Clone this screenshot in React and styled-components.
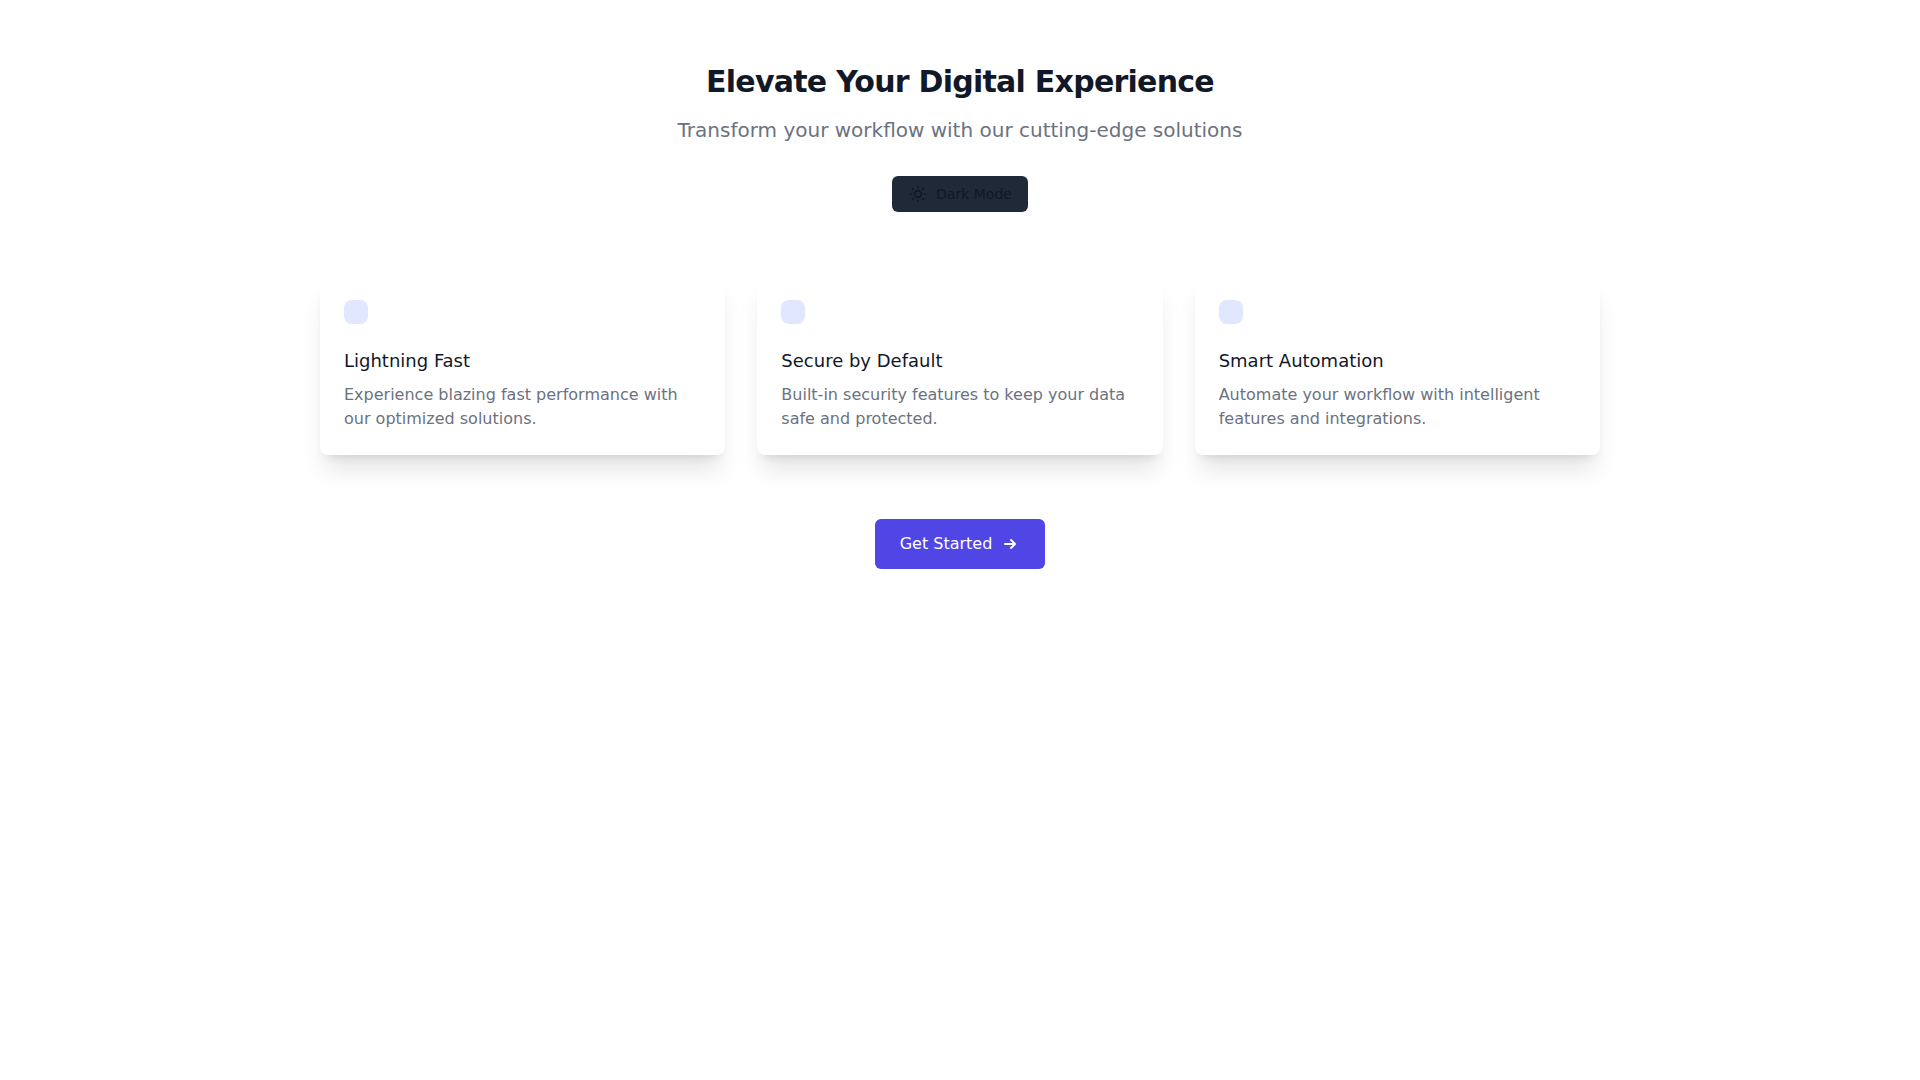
import { useState } from 'react';
import styled, { createGlobalStyle } from 'styled-components';

const GlobalStyle = createGlobalStyle`
    *, *::before, *::after {
        box-sizing: border-box;
    }

    body {
        margin: 0;
        background-color: #ffffff;
        font-family: 'DejaVu Sans', sans-serif;
        line-height: 1.5;
    }
`;

const Page = styled.main`
    min-height: 100vh;
    padding: 64px 32px;
    background-color: #ffffff;
`;

const Container = styled.div`
    max-width: 1280px;
    margin: 0 auto;
    display: flex;
    flex-direction: column;
    align-items: center;
    gap: 64px;
`;

const Header = styled.header`
    display: flex;
    flex-direction: column;
    align-items: center;
    text-align: center;
`;

const Title = styled.h1`
    margin: 0;
    font-size: 30px;
    line-height: 36px;
    font-weight: 800;
    letter-spacing: -0.025em;
    color: #111827;
`;

const Subtitle = styled.p`
    margin: 16px 0 0;
    font-size: 20px;
    line-height: 28px;
    color: #6b7280;
`;

const ModeButton = styled.button`
    display: inline-flex;
    align-items: center;
    gap: 8px;
    margin-top: 32px;
    padding: 8px 16px;
    border: none;
    border-radius: 6px;
    background-color: #1f2937;
    color: #111827;
    font-family: inherit;
    font-size: 14px;
    line-height: 20px;
    cursor: pointer;
`;

const Icon = styled.svg`
    width: 20px;
    height: 20px;
    flex-shrink: 0;
    fill: ${(props) => (props.$outline ? 'none' : 'currentColor')};
    stroke: ${(props) => (props.$outline ? 'currentColor' : 'none')};
    stroke-width: 2;
    stroke-linecap: round;
    stroke-linejoin: round;
`;

const Features = styled.section`
    width: 100%;
    display: grid;
    grid-template-columns: repeat(3, minmax(0, 1fr));
    gap: 32px;
`;

const Card = styled.article`
    padding: 24px;
    border-radius: 8px;
    background-color: #ffffff;
    box-shadow: 0 20px 25px -5px rgba(0, 0, 0, 0.1), 0 8px 10px -6px rgba(0, 0, 0, 0.1);
`;

const CardBadge = styled.div`
    width: 24px;
    height: 24px;
    border-radius: 8px;
    background-color: #e0e7ff;
`;

const CardTitle = styled.h3`
    margin: 23px 0 0;
    font-size: 18px;
    line-height: 28px;
    font-weight: 500;
    color: #111827;
`;

const CardText = styled.p`
    margin: 8px 0 0;
    font-size: 16px;
    line-height: 24px;
    color: #6b7280;
`;

const StartButton = styled.a`
    display: inline-flex;
    align-items: center;
    gap: 8px;
    padding: 12px 24px;
    border: 1px solid transparent;
    border-radius: 6px;
    background-color: #4f46e5;
    color: #ffffff;
    font-size: 16px;
    line-height: 24px;
    font-weight: 500;
    text-decoration: none;
`;

const features = [
    {
        title: 'Lightning Fast',
        text: 'Experience blazing fast performance with our optimized solutions.',
    },
    {
        title: 'Secure by Default',
        text: 'Built-in security features to keep your data safe and protected.',
    },
    {
        title: 'Smart Automation',
        text: 'Automate your workflow with intelligent features and integrations.',
    },
];

const SunIcon = () => (
    <Icon $outline viewBox="0 0 24 24">
        <path d="M12 3v1m0 16v1m9-9h-1M4 12H3m15.364 6.364l-.707-.707M6.343 6.343l-.707-.707m12.728 0l-.707.707M6.343 17.657l-.707.707M16 12a4 4 0 11-8 0 4 4 0 018 0z" />
    </Icon>
);

const ArrowIcon = () => (
    <Icon viewBox="0 0 20 20">
        <path d="M10.293 5.293a1 1 0 011.414 0l4 4a1 1 0 010 1.414l-4 4a1 1 0 01-1.414-1.414L12.586 11H5a1 1 0 110-2h7.586l-2.293-2.293a1 1 0 010-1.414z" />
    </Icon>
);

function App() {
    const [dark, setDark] = useState(false);

    return (
        <Page>
            <GlobalStyle />
            <Container>
                <Header>
                    <Title>Elevate Your Digital Experience</Title>
                    <Subtitle>Transform your workflow with our cutting-edge solutions</Subtitle>
                    <ModeButton type="button" aria-pressed={dark} onClick={() => setDark(!dark)}>
                        <SunIcon />
                        Dark Mode
                    </ModeButton>
                </Header>

                <Features>
                    {features.map((feature) => (
                        <Card key={feature.title}>
                            <CardBadge />
                            <CardTitle>{feature.title}</CardTitle>
                            <CardText>{feature.text}</CardText>
                        </Card>
                    ))}
                </Features>

                <StartButton href="#">
                    Get Started
                    <ArrowIcon />
                </StartButton>
            </Container>
        </Page>
    );
}

export default App;
